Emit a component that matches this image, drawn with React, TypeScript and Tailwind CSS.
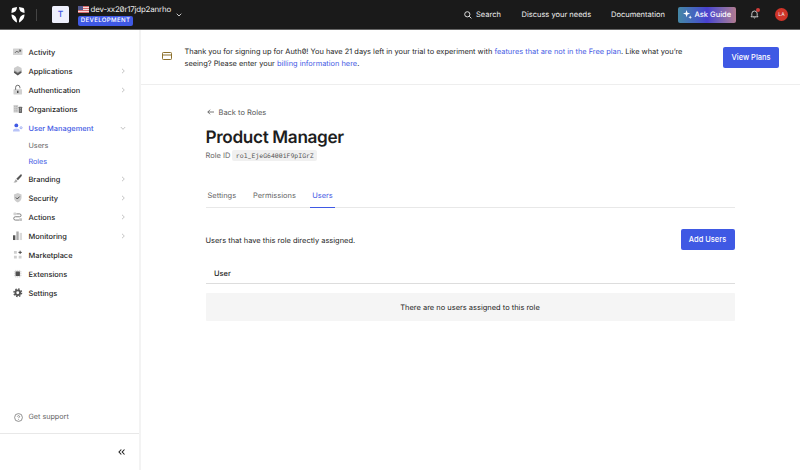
import React from "react";

type NavItem = { label: string; icon: React.ReactNode; chevron?: "right" | "down"; active?: boolean };

const Icon = ({ children }: { children: React.ReactNode }) => (
  <svg viewBox="0 0 20 20" className="mt-px h-[9.5px] w-[9.5px] shrink-0 overflow-visible" fill="none">
    {children}
  </svg>
);

const topItems: NavItem[] = [
  {
    label: "Activity",
    icon: (
      <Icon>
        <rect x="0" y="3" width="20" height="14" rx="1" fill="#d2d2d2" />
        <path d="M4 12.5l4-4 3 3 5-5M12.5 6.5H16V10" stroke="#444" strokeWidth="1.5" />
      </Icon>
    ),
  },
  {
    label: "Applications",
    chevron: "right",
    icon: (
      <Icon>
        <path d="M2 14l8 6 8-6v-3H2z" fill="#555" />
        <path d="M2 10l8 6 8-6V8H2z" fill="#909090" />
        <path d="M10 0l8 4v5l-8 4-8-4V4z" fill="#cccccc" />
      </Icon>
    ),
  },
  {
    label: "Authentication",
    chevron: "right",
    icon: (
      <Icon>
        <rect x="1" y="9" width="18" height="11" rx="1" fill="#d0d0d0" />
        <path d="M5.5 10V5a4.5 4.5 0 0 1 9 0v2" stroke="#555" strokeWidth="1.8" />
        <path d="M10 12v5" stroke="#444" strokeWidth="3" />
      </Icon>
    ),
  },
  {
    label: "Organizations",
    icon: (
      <Icon>
        <path d="M1 2h10v16H1z" fill="#d4d4d4" />
        <path d="M4 4v13M8 4v13" stroke="#888" strokeWidth="1.5" strokeDasharray="2 2" />
        <rect x="12" y="6" width="7" height="13" rx="1" fill="#666" />
        <path d="M15.5 8v9" stroke="#ddd" strokeWidth="1.5" strokeDasharray="2 2" />
      </Icon>
    ),
  },
  {
    label: "User Management",
    chevron: "down",
    active: true,
    icon: (
      <Icon>
        <circle cx="7" cy="5" r="4" fill="#3f59e4" />
        <path d="M0 18v-2c0-6 14-6 14 0v2z" fill="#b8c3f8" />
        <circle cx="17" cy="10" r="2.2" stroke="#8799ef" strokeWidth="1.6" />
      </Icon>
    ),
  },
];

const bottomItems: NavItem[] = [
  {
    label: "Branding",
    chevron: "right",
    icon: (
      <Icon>
        <path d="M16.5 0.5c3 0 2.5 2.5 1 4.500l-7 8-3.500-3z" fill="#555" />
        <path d="M6 11l3.500 3.500c-2 4-6 4-8.500 3 3-1 2-3.500 5-6.500z" fill="#aaa" />
      </Icon>
    ),
  },
  {
    label: "Security",
    chevron: "right",
    icon: (
      <Icon>
        <path d="M10 0l8 3v7c0 5-4 8-8 10-4-2-8-5-8-10V3z" fill="#cdcdcd" />
        <path d="M6 9.500l3 3 5-5" stroke="#444" strokeWidth="2" />
      </Icon>
    ),
  },
  {
    label: "Actions",
    chevron: "right",
    icon: (
      <Icon>
        <path d="M7 4h7a3 3 0 0 1 0 6H5a3 3 0 0 0 0 7h8" stroke="#666" strokeWidth="1.7" />
        <rect x="1" y="1" width="6" height="6" rx="1" fill="#d2d2d2" />
        <rect x="13" y="13" width="6" height="6" rx="1" fill="#c2c2c2" />
      </Icon>
    ),
  },
  {
    label: "Monitoring",
    chevron: "right",
    icon: (
      <Icon>
        <rect x="0" y="9" width="5" height="10" fill="#555" />
        <rect x="7" y="1" width="5" height="18" fill="#aaa" />
        <rect x="14" y="4" width="5" height="15" fill="#dadada" />
      </Icon>
    ),
  },
  {
    label: "Marketplace",
    icon: (
      <Icon>
        <path d="M2 2h6v6H2zM2 12h6v6H2zM12 12h6v6h-6z" fill="#cfcfcf" />
        <path d="M15 1.500v7M11.500 5h7" stroke="#444" strokeWidth="2" />
      </Icon>
    ),
  },
  {
    label: "Extensions",
    icon: (
      <Icon>
        <path d="M6 2v16M10 2v16M14 2v16M2 6h16M2 10h16M2 14h16" stroke="#ccc" strokeWidth="1.8" />
        <rect x="5.5" y="5.5" width="9" height="9" rx="1" fill="#505050" />
      </Icon>
    ),
  },
  {
    label: "Settings",
    icon: (
      <Icon>
        <circle cx="10" cy="10" r="8" stroke="#555" strokeWidth="3" strokeDasharray="3.2 3.08" />
        <circle cx="10" cy="10" r="5" stroke="#555" strokeWidth="4" />
      </Icon>
    ),
  },
];

function NavRow({ item }: { item: NavItem }) {
  return (
    <a
      className={`flex h-[19px] items-center pr-[13px] pl-[13px] text-[7.4px] font-medium ${
        item.active ? "text-[#3f59e4]" : "text-[#1e1e1e]"
      }`}
    >
      {item.icon}
      <span className="ml-[6px] flex-1 pt-[1.5px] whitespace-nowrap">{item.label}</span>
      {item.chevron && (
        <svg
          viewBox="0 0 6 6"
          className={`mt-px h-[6px] w-[6px] ${item.chevron === "down" ? "rotate-90" : ""}`}
          fill="none"
          stroke="#aaa"
          strokeWidth=".7"
        >
          <path d="M2 .8L4.300 3 2 5.200" />
        </svg>
      )}
    </a>
  );
}

function Header() {
  return (
    <header className="flex h-[30px] shrink-0 items-center border-b border-[#666] bg-[#1a1a1a] text-[7.5px] text-[#eee]">
      <svg viewBox="0 0 28 32" className="ml-[11px] h-[16px] w-[14px]" fill="#fff">
        <path d="M3 2l9-2c0 7-4 11-11 12C1 8 1 4 3 2zM25 2l-9-2c0 7 4 11 11 12 0-4 0-8-2-10zM1 15c7 1 11 6 11 16C6 28 1 23 1 15zM27 15c-7 1-11 6-11 16 6-3 11-8 11-16z" />
      </svg>
      <span className="ml-[11px] h-[12px] w-px bg-[#444]" />
      <span className="ml-[15px] flex h-[17px] w-[17px] items-center justify-center rounded-[1.5px] bg-[#eef0fc] pt-px text-[8.5px] font-medium text-[#3f59e4]">
        T
      </span>
      <div className="ml-[9px] flex w-[93px] flex-col items-start">
        <div className="flex h-[11px] items-center text-[7.9px]">
          <svg viewBox="0 0 22 14" className="h-[7px] w-[11px] shrink-0">
            <path d="M0 0h22v14H0z" fill="#f4dcdc" />
            <path d="M0 1h22M0 5h22M0 9h22M0 13h22" stroke="#d46a6c" strokeWidth="2" />
            <path d="M0 0h10v8H0z" fill="#53598e" />
          </svg>
          <span className="ml-[1.5px] pt-px tracking-[-0.17px] whitespace-nowrap">dev-xx20r17jdp2anrho</span>
        </div>
        <span className="mt-px flex h-[10px] w-[55px] items-center justify-center rounded-[2px] bg-[#3f59e4] pt-px text-[6.1px] font-medium tracking-[0.35px] text-white">
          DEVELOPMENT
        </span>
      </div>
      <svg viewBox="0 0 6 4" className="ml-[5px] h-[4px] w-[6px]" fill="none" stroke="#ddd" strokeWidth=".9">
        <path d="M.7.7L3 3 5.300.7" />
      </svg>
      <div className="ml-auto flex items-center">
        <svg viewBox="0 0 8 8" className="h-[8px] w-[8px]" fill="none" stroke="#eee" strokeWidth=".9">
          <circle cx="3.3" cy="3.3" r="2.6" />
          <path d="M5.200 5.200l2.200 2.200" />
        </svg>
        <span className="ml-[4.5px] w-[45.5px] pt-[1px]">Search</span>
        <span className="w-[89.5px] pt-[1px] whitespace-nowrap">Discuss your needs</span>
        <span className="w-[67px] pt-[1px]">Documentation</span>
        <span className="flex h-[16px] w-[58px] items-center rounded-[2px] bg-linear-to-r from-[#4587a5] via-[#493fd0] to-[#b27a90] pl-[4.5px] font-medium text-white">
          <svg viewBox="0 0 10 10" className="h-[9px] w-[9px]" fill="#fff">
            <path d="M4 0l1 3 3 1-3 1-1 3-1-3-3-1 3-1zM8 6l.6 1.400L10 8l-1.400.6L8 10l-.6-1.400L6 8l1.400-.6z" />
          </svg>
          <span className="ml-[3px] pt-px whitespace-nowrap">Ask Guide</span>
        </span>
        <span className="relative ml-[13.5px] h-[9px] w-[9px]">
          <svg viewBox="0 0 9 9" className="h-[9px] w-[9px]" fill="none" stroke="#eee" strokeWidth=".8">
            <path d="M1 6.800h7L7.200 5.600V3.700a2.700 2.700 0 0 0-5.400 0v1.900zM3.600 7.200q.9 1.600 1.800 0" />
          </svg>
          <i className="absolute -top-[2px] -right-[1.5px] h-[4px] w-[4px] rounded-full bg-[#d03c38]" />
        </span>
        <span className="mr-[12px] ml-[16.5px] flex h-[13px] w-[13px] items-center justify-center rounded-full bg-[#cf3429] pt-px text-[5px]">
          LA
        </span>
      </div>
    </header>
  );
}

function Sidebar() {
  return (
    <aside className="flex w-[141px] shrink-0 flex-col border-r-2 border-[#f3f3f3] pt-[12px]">
      <nav>
        {topItems.map((i) => (
          <NavRow key={i.label} item={i} />
        ))}
        <div className="flex h-[32px] flex-col pl-[28.5px] text-[7.2px]">
          <span className="flex h-[16px] items-center pt-[2px] text-[#666]">Users</span>
          <span className="flex h-[16px] items-center pt-[2px] text-[#3f59e4]">Roles</span>
        </div>
        {bottomItems.map((i) => (
          <NavRow key={i.label} item={i} />
        ))}
      </nav>
      <div className="mt-auto flex h-[33px] items-center border-b border-[#e8e8e8] pl-[13.5px] text-[7.2px] text-[#666]">
        <svg viewBox="0 0 9 9" className="h-[9px] w-[9px]" fill="none" stroke="#666" strokeWidth=".7">
          <circle cx="4.5" cy="4.5" r="3.9" />
          <path d="M3.400 3.700c0-1.500 2.300-1.300 2.200 0 0 .7-1.100.7-1.100 1.500M4.500 6v.7" />
        </svg>
        <span className="ml-[6px]">Get support</span>
      </div>
      <div className="flex h-[36px] items-center justify-end pr-[14px]">
        <svg viewBox="0 0 7 6" className="h-[6px] w-[7px]" fill="none" stroke="#222" strokeWidth="1.1">
          <path d="M3.300.5L1 3l2.300 2.500M6.500.5L4.200 3l2.300 2.500" />
        </svg>
      </div>
    </aside>
  );
}

export default function App() {
  return (
    <div className="flex h-[470px] w-[800px] flex-col overflow-hidden bg-white font-['Inter',sans-serif] leading-none text-[#1e1e1e] [font-feature-settings:'zero'] [text-rendering:geometricPrecision]">
      <Header />
      <div className="flex min-h-0 flex-1">
        <Sidebar />
        <main className="flex flex-1 flex-col text-[7.47px]">
          <section className="flex h-[55px] shrink-0 items-center border-b border-[#eee] pr-[21px] pl-[21px]">
            <svg viewBox="0 0 10 8" className="-mt-[2px] h-[8px] w-[10px]" fill="none" stroke="#8c702c" strokeWidth="1">
              <rect x=".5" y=".5" width="9" height="7" rx=".8" />
              <path d="M.5 3h9" />
            </svg>
            <p className="ml-[12.5px] flex-1 pt-[2px] text-[7.42px] leading-[12px] whitespace-nowrap">
              Thank you for signing up for Auth0! You have 21 days left in your trial to experiment with{" "}
              <a className="text-[#3f59e4]">features that are not in the Free plan</a>. Like what you’re
              <br />
              seeing? Please enter your <a className="text-[#3f59e4]">billing information here</a>.
            </p>
            <button className="h-[21px] w-[56px] rounded-[2px] bg-[#3f59e4] pt-px font-medium text-white">View Plans</button>
          </section>
          <section className="ml-[64.5px] flex w-[529px] flex-col pt-[21px]">
            <a className="flex h-[12px] items-center text-[#555]">
              <svg viewBox="0 0 7 6" className="ml-[1px] h-[6px] w-[7px]" fill="none" stroke="#555" strokeWidth=".8">
                <path d="M7 3H.8M3.100.7L.8 3l2.300 2.300" />
              </svg>
              <span className="ml-[5px] pt-[2px]">Back to Roles</span>
            </a>
            <h1 className="mt-[10px] h-[19px] text-[17.2px] leading-[20px] font-semibold tracking-[-0.35px]">Product Manager</h1>
            <div className="mt-[3px] flex h-[11px] items-center text-[#666]">
              <span className="pt-px">Role ID</span>
              <code className="ml-[2px] flex h-[11px] w-[85px] items-center justify-center rounded-[2px] bg-[#f0f0f0] pt-px font-['Roboto_Mono','DejaVu_Sans_Mono',monospace] text-[6.5px] text-[#555]">
                rol_EjeG6400iF9pIGrZ
              </code>
            </div>
            <div className="mt-[22px] flex h-[25px] border-b border-[#e8e8e8] text-[#666]">
              <span className="flex w-[47.5px] items-center pt-px pl-[2px]">Settings</span>
              <span className="flex w-[57px] items-center pt-px">Permissions</span>
              <span className="-mb-px flex w-[25px] items-center justify-center border-b border-[#3f59e4] pt-[2px] text-[#3f59e4]">
                Users
              </span>
            </div>
            <div className="mt-[21px] flex h-[21px] items-center justify-between">
              <span className="pt-[2px]">Users that have this role directly assigned.</span>
              <button className="h-[21px] w-[54px] rounded-[2px] bg-[#3f59e4] pt-px font-medium text-white">Add Users</button>
            </div>
            <div className="mt-[12px] flex h-[22px] items-center border-b border-[#ddd] pt-[2px] pl-[8.5px] font-medium">User</div>
            <div className="mt-[9px] flex h-[28px] items-center justify-center rounded-[1px] bg-[#f5f5f5] pt-px">
              There are no users assigned to this role
            </div>
          </section>
        </main>
      </div>
    </div>
  );
}
